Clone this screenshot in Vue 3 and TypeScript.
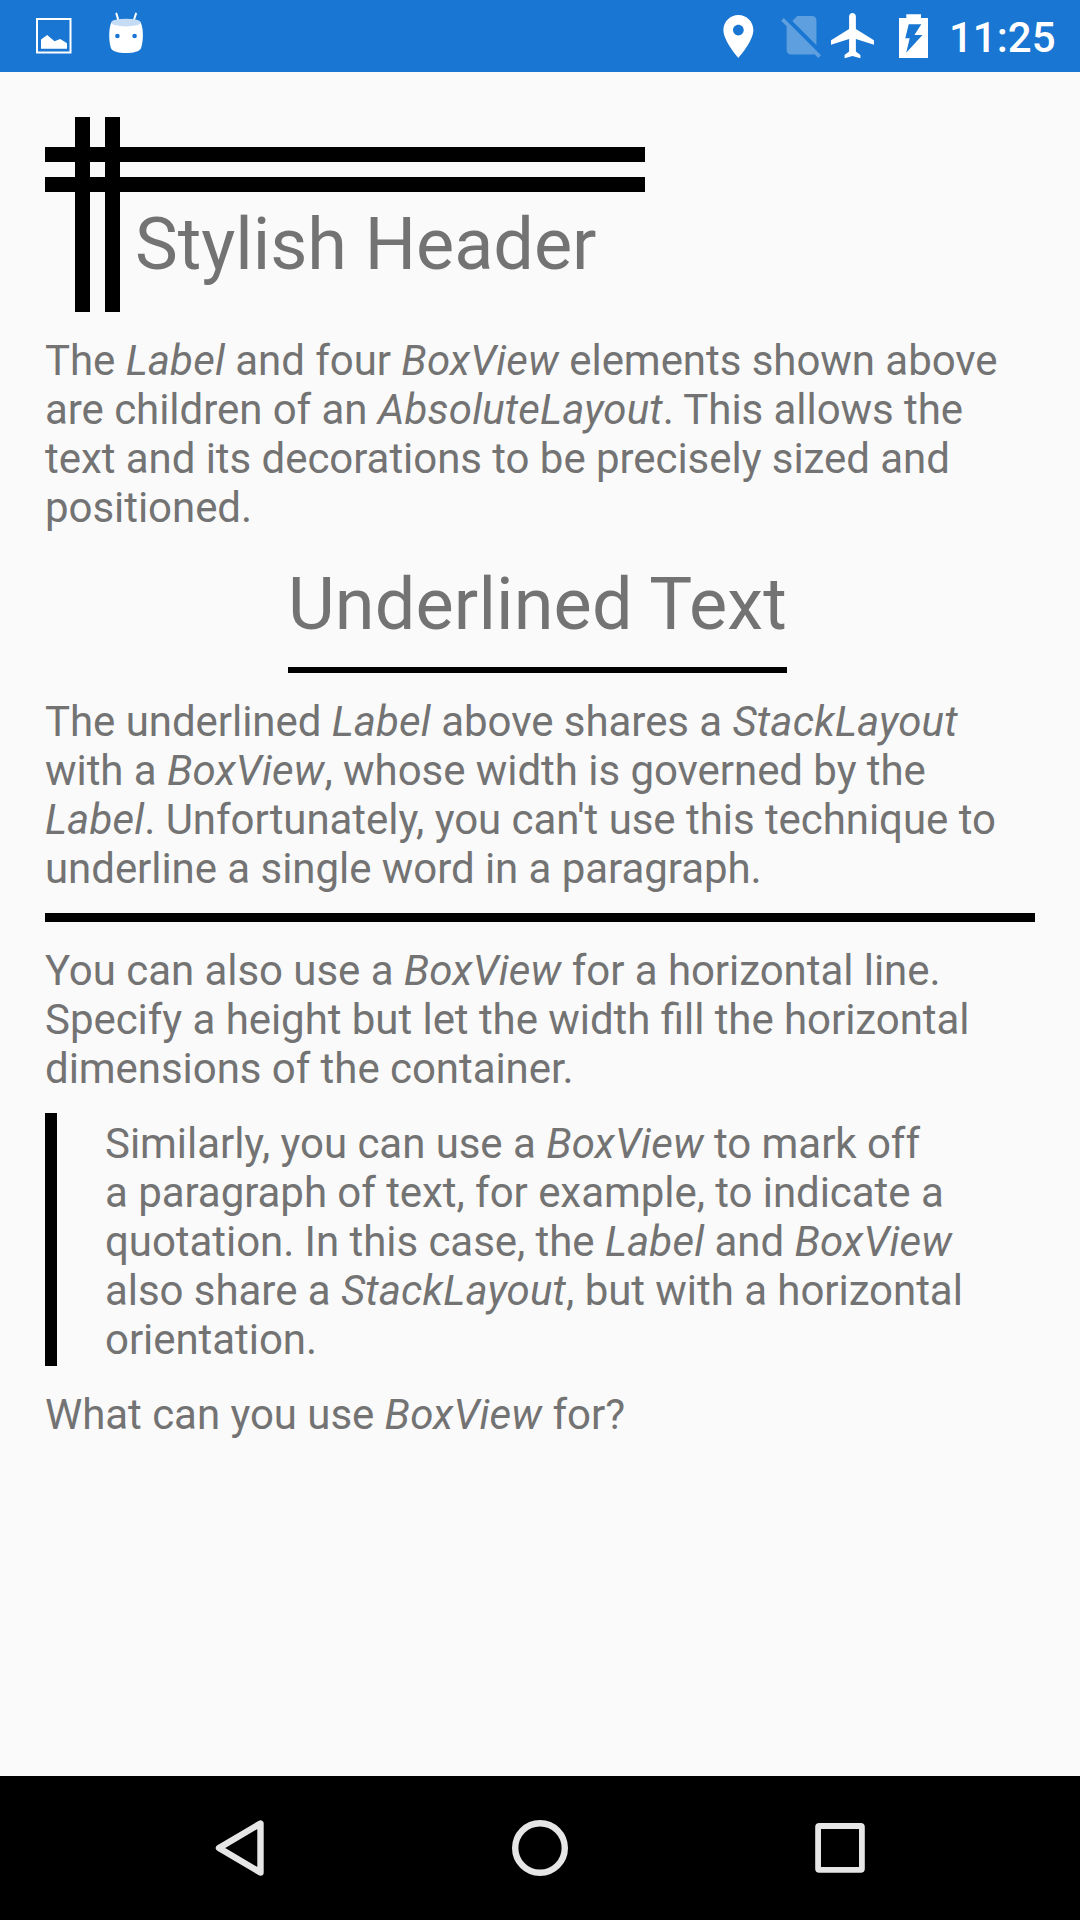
<script setup lang="ts">
interface Span {
  text: string
  italic?: boolean
}
type Line = Span[]

// Splits a line on asterisks: every second piece is an italic class name.
function parse(lines: string[]): Line[] {
  return lines.map((line) =>
    line
      .split('*')
      .map((text, i) => ({ text, italic: i % 2 === 1 }))
      .filter((span) => span.text !== ''),
  )
}

const intro = parse([
  'The *Label* and four *BoxView* elements shown above',
  'are children of an *AbsoluteLayout*. This allows the',
  'text and its decorations to be precisely sized and',
  'positioned.',
])
const underlined = parse([
  'The underlined *Label* above shares a *StackLayout*',
  'with a *BoxView*, whose width is governed by the',
  "*Label*. Unfortunately, you can't use this technique to",
  'underline a single word in a paragraph.',
])
const horizontal = parse([
  'You can also use a *BoxView* for a horizontal line.',
  'Specify a height but let the width fill the horizontal',
  'dimensions of the container.',
])
const quote = parse([
  'Similarly, you can use a *BoxView* to mark off',
  'a paragraph of text, for example, to indicate a',
  'quotation. In this case, the *Label* and *BoxView*',
  'also share a *StackLayout*, but with a horizontal',
  'orientation.',
])
const closing = parse(['What can you use *BoxView* for?'])
</script>

<template>
  <div class="screen">
    <header class="status">
      <div class="notifications">
        <svg width="36" height="36" viewBox="0 0 36 36">
          <rect x="1" y="1" width="33.5" height="33.5" fill="none" stroke="#fff" stroke-width="2" />
          <path d="M5 21.5L11.2 17L18.5 23.3L24.2 21L31 25.3V30.8H5Z" fill="#fff" />
        </svg>
        <svg width="36" height="44" viewBox="108 11 36 44">
          <path d="M116.4 13.6L118.6 21M136 13.6L133.6 21" stroke="#fff" stroke-width="2" stroke-linecap="round" />
          <path d="M111.2 22.5C108.6 29 108.6 41 111 48.2C113 54.6 139 54.6 141 48.2C143.6 41 143.6 29 140.8 22.5Z" fill="#fff" />
          <ellipse cx="126" cy="22.6" rx="14.8" ry="3.9" fill="#c5dcf4" />
          <circle cx="117.4" cy="36" r="2.3" fill="#1976d2" />
          <circle cx="134.6" cy="36" r="2.3" fill="#1976d2" />
        </svg>
      </div>
      <div class="system">
        <svg class="pin" width="32" height="48" viewBox="722 12 32 48">
          <path
            transform="translate(712.7 10.8) scale(2.14)"
            fill="#fff"
            d="M12 2C8.13 2 5 5.13 5 9c0 5.25 7 13 7 13s7-7.75 7-13c0-3.87-3.13-7-7-7zm0 9.5c-1.38 0-2.5-1.12-2.5-2.5s1.12-2.5 2.5-2.5 2.5 1.12 2.5 2.5-1.12 2.5-2.5 2.5z"
          />
        </svg>
        <svg class="sim" width="42" height="48" viewBox="780 12 42 48">
          <path
            transform="translate(776 9.7) scale(2.13)"
            fill="#fff"
            fill-opacity="0.3"
            d="M18.99 5c0-1.1-.89-2-1.99-2h-7L7.66 5.34 19 16.68 18.99 5zM3.65 3.88L2.38 5.15 5 7.77V19c0 1.1.9 2 2 2h10.01c.35 0 .67-.1.96-.26l1.88 1.88 1.27-1.27L3.65 3.88z"
          />
        </svg>
        <svg class="plane" width="46" height="48" viewBox="830 12 46 48">
          <path
            transform="translate(826.5 8.6) scale(2.26)"
            fill="#fff"
            d="M21 16v-2l-8-5V3.5c0-.83-.67-1.5-1.5-1.5S10 2.67 10 3.5V9l-8 5v2l8-2.5V19l-2 1.5V22l3.5-1 3.5 1v-1.5L13 19v-5.5l8 2.5z"
          />
        </svg>
        <svg class="battery" width="30" height="48" viewBox="899 12 30 48">
          <path
            fill="#fff"
            fill-rule="evenodd"
            d="M906.3 14.2H921V18H928V58H899V18H906.3ZM908.7 24.3L905.3 38.3H909.7L906.2 52.7L922.5 35H914.4L921.3 24.3Z"
          />
        </svg>
        <span class="clock">11:25</span>
      </div>
    </header>

    <main class="content">
      <section class="stylish">
        <i class="bar across first"></i>
        <i class="bar across second"></i>
        <i class="bar down left"></i>
        <i class="bar down right"></i>
        <h1 class="heading">Stylish Header</h1>
      </section>

      <p class="text">
        <span v-for="(line, i) in intro" :key="i" class="line"><span v-for="(s, j) in line" :key="j" :class="{ italic: s.italic }">{{ s.text }}</span></span>
      </p>

      <section class="underlined">
        <h1 class="heading">Underlined Text</h1>
        <div class="underline"></div>
      </section>

      <p class="text">
        <span v-for="(line, i) in underlined" :key="i" class="line"><span v-for="(s, j) in line" :key="j" :class="{ italic: s.italic }">{{ s.text }}</span></span>
      </p>

      <div class="rule"></div>

      <p class="text">
        <span v-for="(line, i) in horizontal" :key="i" class="line"><span v-for="(s, j) in line" :key="j" :class="{ italic: s.italic }">{{ s.text }}</span></span>
      </p>

      <section class="quote">
        <div class="mark"></div>
        <p class="text">
          <span v-for="(line, i) in quote" :key="i" class="line"><span v-for="(s, j) in line" :key="j" :class="{ italic: s.italic }">{{ s.text }}</span></span>
        </p>
      </section>

      <p class="text">
        <span v-for="(line, i) in closing" :key="i" class="line"><span v-for="(s, j) in line" :key="j" :class="{ italic: s.italic }">{{ s.text }}</span></span>
      </p>
    </main>

    <nav class="nav">
      <svg width="60" height="60" viewBox="210 1818 60 60">
        <path d="M219 1848L260.5 1823.5V1872.5Z" fill="none" stroke="#e6e6e6" stroke-width="6.4" stroke-linejoin="round" />
      </svg>
      <svg width="60" height="60" viewBox="510 1818 60 60">
        <circle cx="540" cy="1848" r="24.8" fill="none" stroke="#e6e6e6" stroke-width="6.4" />
      </svg>
      <svg width="60" height="60" viewBox="810 1818 60 60">
        <path fill="#e6e6e6" fill-rule="evenodd" d="M819.3 1823H860.7Q864.8 1823 864.8 1827.1V1868.7Q864.8 1872.8 860.7 1872.8H819.3Q815.2 1872.8 815.2 1868.7V1827.1Q815.2 1823 819.3 1823ZM821 1829V1867H859V1829Z" />
      </svg>
    </nav>
  </div>
</template>

<style>
body {
  margin: 0;
}
</style>

<style scoped>
.screen {
  width: 1080px;
  height: 1920px;
  display: flex;
  flex-direction: column;
  overflow: hidden;
  background: #fafafa;
  color: #737373;
  font-family: Roboto, sans-serif;
}
svg {
  display: block;
  flex: none;
}
.status {
  flex: none;
  height: 72px;
  display: flex;
  justify-content: space-between;
  background: #1976d2;
  color: #fff;
}
.notifications {
  display: flex;
  gap: 36px;
  padding-left: 36px;
}
.notifications svg:first-child {
  margin-top: 18px;
}
.notifications svg:last-child {
  margin-top: 11px;
}
.system {
  display: flex;
  width: 358px;
}
.system svg {
  margin-top: 12px;
}
.sim {
  margin-left: 26px;
}
.plane {
  margin-left: 8px;
}
.battery {
  margin-left: 23px;
}
.clock {
  margin-left: 20px;
  font-size: 42px;
  font-weight: 500;
  line-height: 49px;
  padding-top: 13px;
}
.content {
  flex: 1;
  display: flex;
  flex-direction: column;
  gap: 18px;
  padding: 45px 45px 0;
}
.stylish {
  position: relative;
  height: 120px;
  padding: 75px 0 0 90px;
}
.bar {
  position: absolute;
  background: #000;
}
.across {
  left: 0;
  width: 600px;
  height: 15px;
}
.first {
  top: 30px;
}
.second {
  top: 60px;
}
.down {
  top: 0;
  width: 15px;
  height: 195px;
}
.left {
  left: 30px;
}
.right {
  left: 60px;
}
.heading {
  margin: 0;
  padding: 10px 0 2px;
  font-size: 72px;
  font-weight: 400;
  line-height: 85px;
  letter-spacing: -0.04px;
  white-space: nowrap;
}
.text {
  margin: 0;
  padding: 6px 0 2px;
  font-size: 42px;
  line-height: 49px;
  letter-spacing: -0.05px;
  font-feature-settings: 'liga' 1;
}
.line {
  display: block;
  height: 49px;
  white-space: pre;
}
.italic {
  font-style: italic;
  letter-spacing: 0.15px;
}
.underlined {
  display: flex;
  flex-direction: column;
  gap: 18px;
  width: 499px;
  margin-left: 243px;
}
.underlined .heading {
  letter-spacing: 0.15px;
}
.underline {
  height: 6px;
  background: #000;
}
.rule {
  height: 9px;
  background: #000;
}
.quote {
  display: flex;
  gap: 48px;
}
.mark {
  width: 12px;
  background: #000;
}
.nav {
  flex: none;
  height: 144px;
  display: flex;
  align-items: center;
  justify-content: center;
  gap: 240px;
  background: #000;
}
</style>
